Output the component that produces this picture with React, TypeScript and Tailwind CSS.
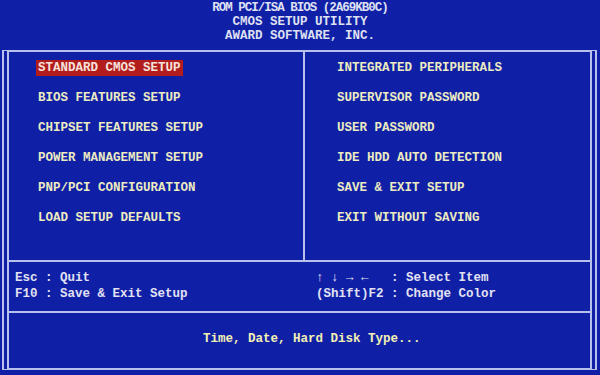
const leftItems = [
  "STANDARD CMOS SETUP",
  "BIOS FEATURES SETUP",
  "CHIPSET FEATURES SETUP",
  "POWER MANAGEMENT SETUP",
  "PNP/PCI CONFIGURATION",
  "LOAD SETUP DEFAULTS",
];

const rightItems = [
  "INTEGRATED PERIPHERALS",
  "SUPERVISOR PASSWORD",
  "USER PASSWORD",
  "IDE HDD AUTO DETECTION",
  "SAVE & EXIT SETUP",
  "EXIT WITHOUT SAVING",
];

function MenuItem({ label, active }: { label: string; active?: boolean }) {
  return (
    <div className="h-[30px] flex items-center">
      <span
        className={
          active
            ? "px-[2px] leading-[16px] bg-[#b21c1c] text-[#f6e2dc]"
            : "px-[2px] leading-[16px] text-[#ecebc2]"
        }
      >
        {label}
      </span>
    </div>
  );
}

export default function App() {
  return (
    <div className="w-[600px] h-[375px] overflow-hidden bg-[#1020a6] font-['Liberation_Mono','DejaVu_Sans_Mono',monospace] font-bold text-[12.5px] whitespace-pre">
      {/* Title lines */}
      <div className="pt-[1px] text-center text-[#dfe0f2] leading-[14px]">
        <div className="tracking-[-1px]">ROM PCI/ISA BIOS (2A69KB0C)</div>
        <div>CMOS SETUP UTILITY</div>
        <div>AWARD SOFTWARE, INC.</div>
      </div>

      {/* Main frame */}
      <div className="mt-[7px] ml-[2px] w-[595px] h-[320px] border-x-[7px] border-y-[2px] border-double border-[#b8c0ee] flex flex-col">
        {/* Menu columns */}
        <div className="h-[208px] flex">
          <div className="w-[296px] pl-[27px] pt-[1px] border-r-2 border-[#b8c0ee]">
            {leftItems.map((item, i) => (
              <MenuItem key={item} label={item} active={i === 0} />
            ))}
          </div>
          <div className="flex-1 pl-[30px] pt-[1px]">
            {rightItems.map((item) => (
              <MenuItem key={item} label={item} />
            ))}
          </div>
        </div>

        {/* Key help */}
        <div className="h-[53px] border-y-2 border-[#b8c0ee] pt-[8px] pl-[6px] flex text-[#e2e2f2] leading-[16px]">
          <div className="w-[301px]">
            <div>Esc : Quit</div>
            <div>F10 : Save &amp; Exit Setup</div>
          </div>
          <div>
            <div>↑ ↓ → ←   : Select Item</div>
            <div>(Shift)F2 : Change Color</div>
          </div>
        </div>

        {/* Item description */}
        <div className="flex-1 flex items-center pl-[194px] pb-[3px] text-[#f2f0b4]">
          Time, Date, Hard Disk Type...
        </div>
      </div>
    </div>
  );
}
